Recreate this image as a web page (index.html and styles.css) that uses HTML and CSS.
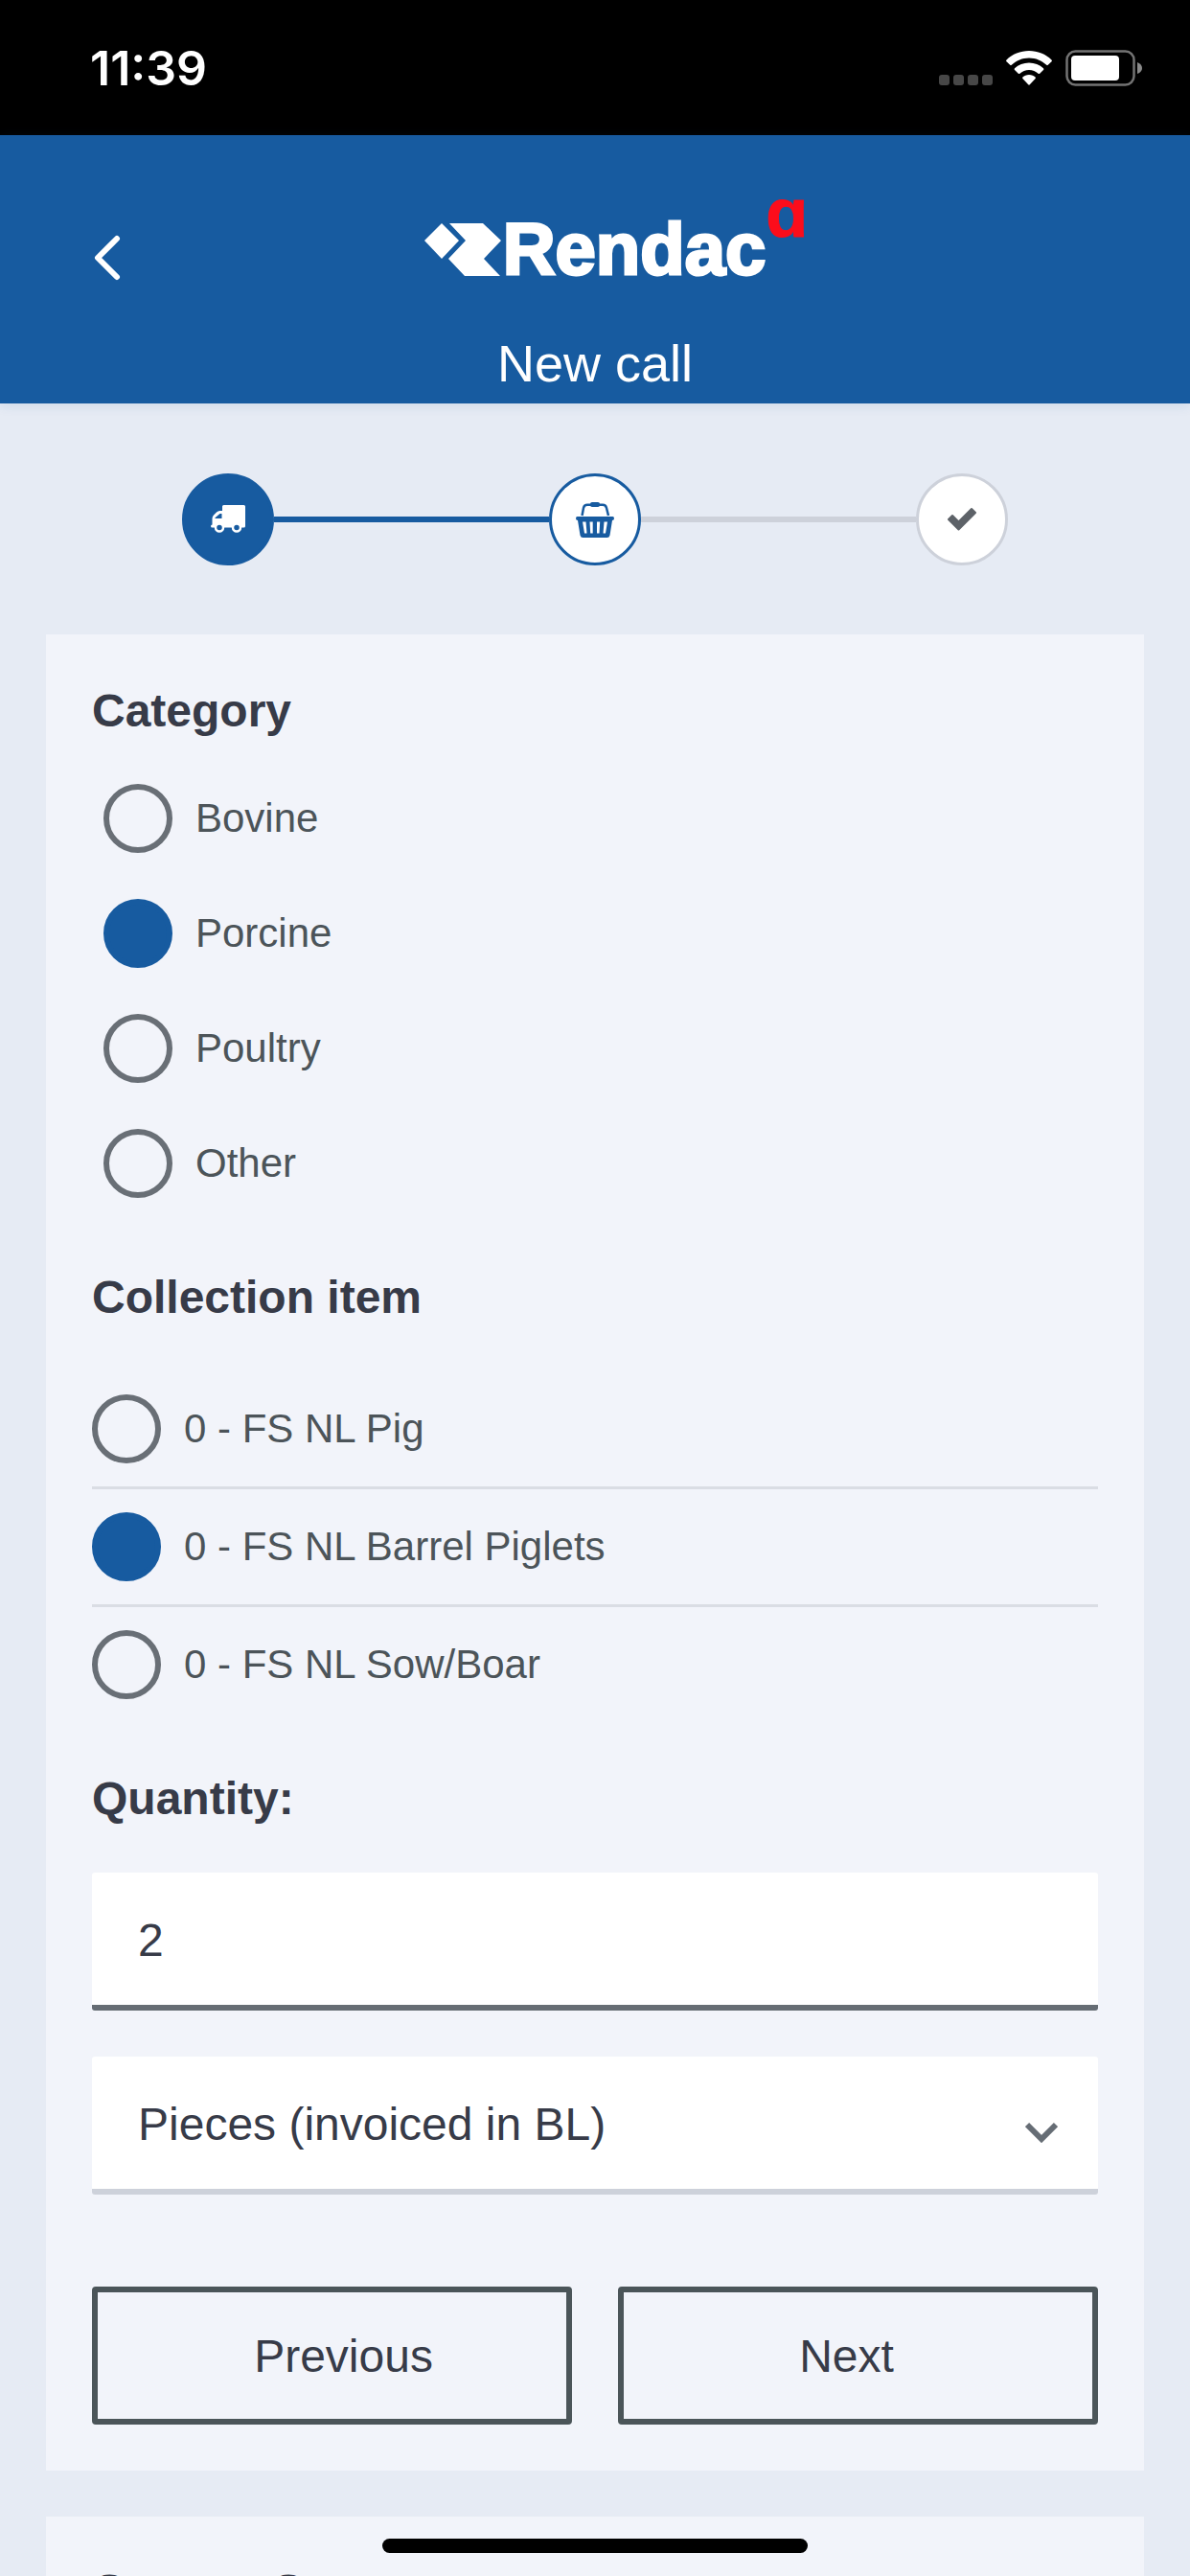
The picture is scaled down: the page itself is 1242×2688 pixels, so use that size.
FILE: index.html
```html
<!DOCTYPE html>
<html lang="en">
<head>
<meta charset="utf-8">
<meta name="viewport" content="width=device-width, initial-scale=1">
<title>Rendac - New call</title>
<link rel="stylesheet" href="styles.css">
</head>
<body>
<div class="status">
  <span class="status-time">11:39</span>
  <div class="status-icons">
    <svg class="signal" width="56" height="36" viewBox="0 0 56 36" fill="#474747" aria-hidden="true">
      <rect x="0" y="25" width="11" height="11" rx="3"/><rect x="15" y="25" width="11" height="11" rx="3"/><rect x="30" y="25" width="11" height="11" rx="3"/><rect x="45" y="25" width="11" height="11" rx="3"/>
    </svg>
    <svg width="48" height="36" viewBox="0 0 48 36" fill="#fff" aria-hidden="true">
      <path d="M24 0C33 0 41.500 3.500 47.500 9.500Q48.300 10.400 47.500 11.200L43.800 14.800Q43 15.500 42.200 14.800C37.300 10.300 31 7.500 24 7.500S10.700 10.300 5.800 14.800Q5 15.500 4.200 14.800L.500 11.200Q-.300 10.400 .500 9.500C6.500 3.500 15 0 24 0Z"/>
      <path d="M24 12.500C29.800 12.500 35 14.700 39 18.300Q39.800 19.200 39 20L35.200 23.700Q34.400 24.400 33.600 23.700C31 21.500 27.700 20 24 20S17 21.500 14.400 23.700Q13.600 24.400 12.800 23.700L9 20Q8.200 19.200 9 18.300C13 14.700 18.200 12.500 24 12.500Z"/>
      <path d="M24 25C26.700 25 29 26 30.600 27.500Q31.300 28.300 30.600 29.100L24.800 35.300Q24 36 23.200 35.300L17.400 29.100Q16.700 28.300 17.400 27.500C19 26 21.300 25 24 25Z"/>
    </svg>
    <svg width="80" height="38" viewBox="0 0 80 38" aria-hidden="true">
      <rect x="1.500" y="1.500" width="70" height="35" rx="9" fill="none" stroke="#737373" stroke-width="2.500"/>
      <rect x="6" y="6" width="50" height="26" rx="4" fill="#fff"/>
      <path d="M75 13Q80 15 80 19T75 25Z" fill="#8a8a8a"/>
    </svg>
  </div>
</div>

<header class="header">
  <div class="header-bar">
    <button class="back" type="button" aria-label="Back">
      <svg width="28" height="48" viewBox="0 0 28 48" fill="none" stroke="#fff" stroke-width="6" stroke-linecap="round" stroke-linejoin="round" aria-hidden="true"><path d="M24 4L4 24L24 44"/></svg>
    </button>
    <div class="logo">
      <svg width="80" height="55" viewBox="0 0 80 55" fill="#fff" aria-hidden="true"><path d="M0 18L18 0L36 18L18 37Z"/><path d="M26 0H61L80 18L62 37L79 55H42L25 37L43 18Z"/></svg>
      <span class="logo-name">Rendac</span>
      <span class="logo-mark">ɑ</span>
    </div>
  </div>
  <h1 class="title">New call</h1>
</header>

<main class="page">
  <ol class="steps">
    <li class="step step-done" aria-label="Transport">
      <svg width="36" height="30" viewBox="0 0 36 30" aria-hidden="true">
        <path fill="#fff" fill-rule="evenodd" d="M12 1.500Q12 0 13.500 0H34.500Q36 0 36 1.500V22Q36 23.500 34.500 23.500H1.500Q0 23.500 0 22T1.500 20.500V14Q1.500 12 3 10.500L6 7.500Q7.500 6 9.500 6H12ZM4.500 14H11.500V9H9.500L4.500 13.300Z"/>
        <circle cx="9" cy="23.500" r="4" fill="#175ba0" stroke="#fff" stroke-width="2.500"/><circle cx="27" cy="23.500" r="4" fill="#175ba0" stroke="#fff" stroke-width="2.500"/>
      </svg>
    </li>
    <li class="rail rail-done" role="presentation"></li>
    <li class="step step-current" aria-label="Items" aria-current="step">
      <svg width="40" height="37" viewBox="0 0 40 37" aria-hidden="true">
        <path d="M6.500 14L8 6Q8.800 2.800 12 2.800H28Q31.200 2.800 32 6L34 14" fill="none" stroke="#175ba0" stroke-width="2.500"/>
        <rect x="15" y="0" width="10" height="5" rx="2" fill="#175ba0"/>
        <path fill="#175ba0" fill-rule="evenodd" d="M1.500 15H38.500Q40 15 40 17T38 19L35.500 34.500Q35 37 32.500 37H7.500Q5 37 4.500 34.500L2 19Q0 19 0 17T1.500 15ZM7 20.500L9 32.500H11.500L10.500 20.500ZM14.500 20.500L15.200 32.500H17.700V20.500ZM22 20.500V32.500H24.500L25.200 20.500ZM29.500 20.500L28.500 32.500H31L33 20.500Z"/>
      </svg>
    </li>
    <li class="rail" role="presentation"></li>
    <li class="step" aria-label="Confirm">
      <svg width="32" height="26" viewBox="0 0 32 26" aria-hidden="true"><path d="M5 10L2 13L12.500 23.500L30 6L26 2L12.500 15.500L6 9Z" fill="#5d6268" stroke="#5d6268" stroke-width="2" stroke-linejoin="round"/></svg>
    </li>
  </ol>

  <form class="card">
    <fieldset class="group">
      <legend class="heading">Category</legend>
      <div class="options options-plain">
        <label class="option"><input type="radio" name="category">Bovine</label>
        <label class="option"><input type="radio" name="category" checked>Porcine</label>
        <label class="option"><input type="radio" name="category">Poultry</label>
        <label class="option"><input type="radio" name="category">Other</label>
      </div>
    </fieldset>
    <fieldset class="group">
      <legend class="heading">Collection item</legend>
      <div class="options options-ruled">
        <label class="option"><input type="radio" name="item">0 - FS NL Pig</label>
        <label class="option"><input type="radio" name="item" checked>0 - FS NL Barrel Piglets</label>
        <label class="option"><input type="radio" name="item">0 - FS NL Sow/Boar</label>
      </div>
    </fieldset>
    <div class="group">
      <label class="heading" for="quantity">Quantity:</label>
      <div class="fields">
        <input class="field field-active" id="quantity" type="text" inputmode="numeric" value="2">
        <div class="select">
          <select class="field" aria-label="Unit"><option>Pieces (invoiced in BL)</option></select>
          <svg class="select-arrow" width="34" height="22" viewBox="0 0 34 22" fill="none" stroke="#666d75" stroke-width="6" aria-hidden="true"><path d="M2 3L17 18L32 3"/></svg>
        </div>
      </div>
    </div>
    <div class="actions">
      <button class="button button-previous" type="button">Previous</button>
      <button class="button button-next" type="button">Next</button>
    </div>
  </form>

  <section class="card card-summary">
    <h2 class="heading">Current Cargo</h2>
  </section>
</main>
<div class="home-indicator"></div>
</body>
</html>
```
FILE: styles.css
```css
* {
  box-sizing: border-box;
}

html {
  height: 100%;
  overflow: hidden;
}

body {
  margin: 0;
  height: 100%;
  overflow: hidden;
  background: #e6ebf4;
  color: #373b48;
  font-family: "Liberation Sans", Arial, sans-serif;
  font-size: 48px;
}

svg {
  display: block;
  flex: none;
}

.status {
  display: flex;
  align-items: center;
  justify-content: space-between;
  height: 141px;
  padding: 0 50px 0 94px;
  background: #000;
  color: #fff;
}

.status-time {
  font-family: Inter, sans-serif;
  font-size: 50px;
  font-weight: 600;
}

.status-icons {
  display: flex;
  align-items: center;
  gap: 14px;
}

.header {
  position: relative;
  padding: 72px 48px 12px;
  background: #175ba0;
  box-shadow: 0 2px 12px rgb(23 91 160 / 12%);
  color: #fff;
}

.header-bar {
  display: grid;
  grid-template-columns: 1fr auto 1fr;
  height: 112px;
}

.back {
  width: 128px;
  padding: 0 0 0 50px;
  border: 0;
  background: none;
}

.logo {
  position: relative;
  display: flex;
  align-items: center;
  gap: 2px;
  height: 94px;
}

.logo-name {
  font-size: 76px;
  font-weight: 700;
  line-height: 94px;
  -webkit-text-stroke: 3px #fff;
}

.logo-mark {
  position: absolute;
  left: 100%;
  top: -27px;
  color: #fc0d1b;
  font-size: 72px;
  font-weight: 700;
  line-height: 72px;
  -webkit-text-stroke: 1px #fc0d1b;
}

.title {
  margin: 24px 0 0;
  font-size: 54px;
  font-weight: 400;
  line-height: 60px;
  text-align: center;
}

.page {
  display: grid;
  gap: 48px;
  padding: 0 48px;
}

.steps {
  display: flex;
  align-items: center;
  margin: 0;
  padding: 73px 142px 24px;
  list-style: none;
}

.step {
  display: flex;
  align-items: center;
  justify-content: center;
  flex: none;
  width: 96px;
  height: 96px;
  border: 3px solid #cdd1da;
  border-radius: 50%;
  background: #fff;
}

.step-done {
  border-color: #175ba0;
  background: #175ba0;
}

.step-current {
  border-color: #175ba0;
}

.rail {
  flex: 1;
  height: 6px;
  background: #cdd1da;
}

.rail-done {
  background: #175ba0;
}

.card {
  display: grid;
  gap: 48px;
  padding: 48px;
  background: #f2f4fa;
}

.card-summary {
  padding-top: 46px;
}

.group {
  min-width: 0;
  margin: 0;
  padding: 0;
  border: 0;
}

.heading {
  display: block;
  margin: 0;
  padding: 0;
  font-size: 48px;
  font-weight: 700;
  line-height: 64px;
}

.options {
  color: #4c5459;
  font-size: 42px;
}

.options-plain {
  margin: 20px 12px 0;
}

.options-ruled {
  margin-top: 45px;
}

.option {
  display: flex;
  align-items: center;
  gap: 24px;
  min-height: 120px;
}

.options-ruled .option + .option {
  border-top: 3px solid #dadde4;
  min-height: 123px;
}

.option input {
  appearance: none;
  flex: none;
  width: 72px;
  height: 72px;
  margin: 0;
  border: 6px solid #696f76;
  border-radius: 50%;
}

.option input:checked {
  border-color: #175ba0;
  background: #175ba0;
}

.fields {
  display: grid;
  gap: 48px;
  margin-top: 45px;
}

.field {
  appearance: none;
  display: block;
  width: 100%;
  height: 144px;
  padding: 3px 48px 0;
  border: 0;
  border-bottom: 6px solid #cdd1da;
  border-radius: 3px;
  background: #fff;
  color: inherit;
  font: inherit;
}

.field-active {
  border-color: #666d74;
}

.select {
  position: relative;
}

.select-arrow {
  position: absolute;
  right: 42px;
  top: 68px;
  pointer-events: none;
}

.actions {
  display: grid;
  grid-template-columns: 1fr 1fr;
  gap: 48px;
  margin-top: 48px;
}

.button {
  height: 144px;
  padding: 0;
  border: 6px solid #4b5559;
  border-radius: 4px;
  background: none;
  color: inherit;
  font: inherit;
}

.button-previous {
  padding-left: 24px;
}

.button-next {
  padding-right: 24px;
}

.home-indicator {
  position: fixed;
  bottom: 24px;
  left: 50%;
  width: 444px;
  height: 15px;
  border-radius: 8px;
  background: #000;
  transform: translateX(-50%);
}
```
